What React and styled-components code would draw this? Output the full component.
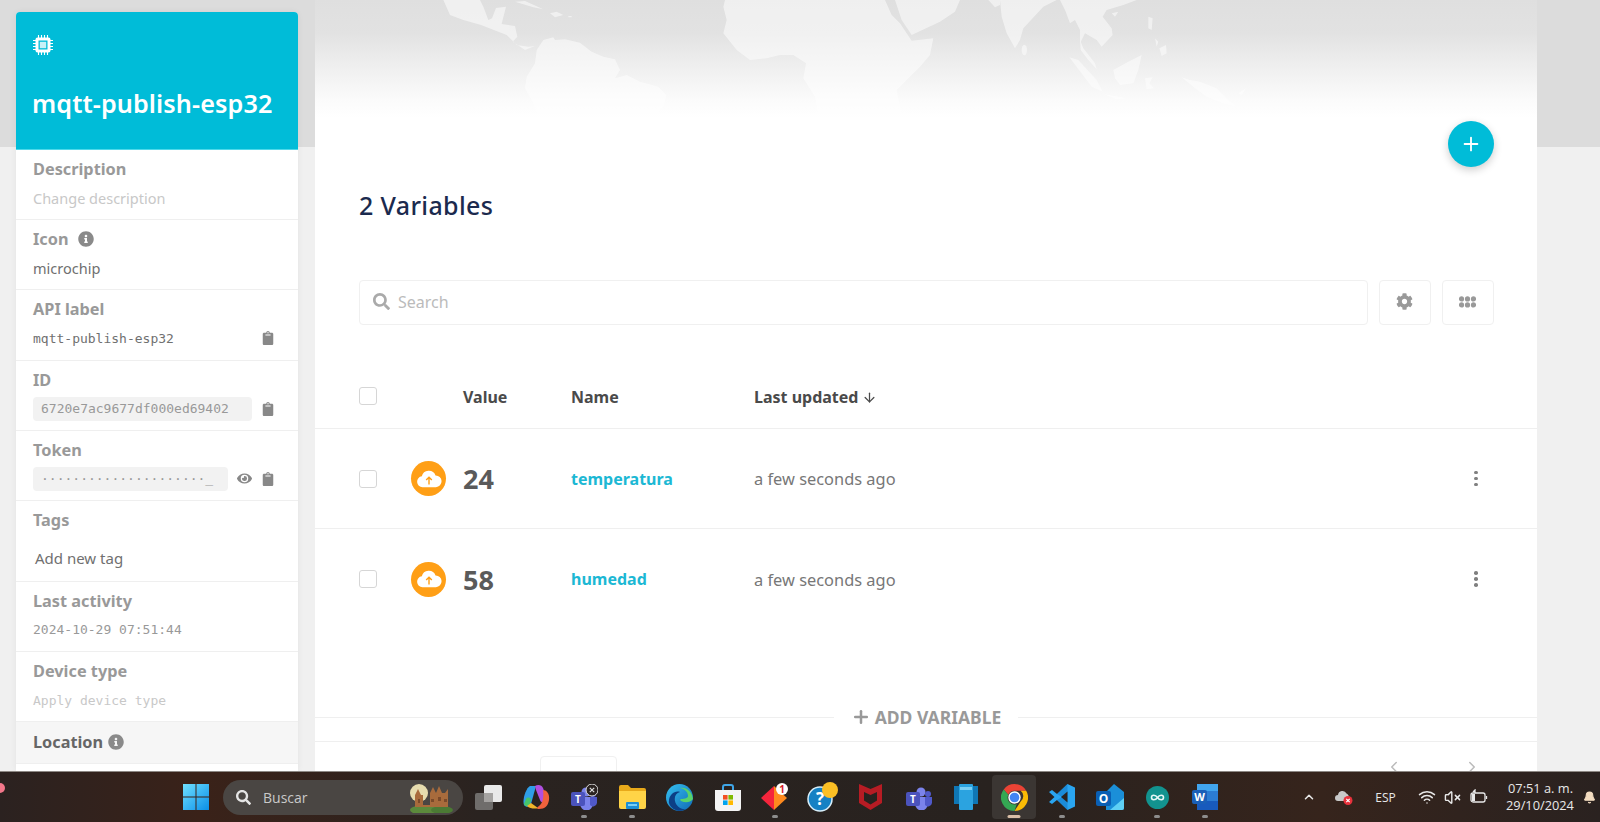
import React from "react";
import styled, { createGlobalStyle } from "styled-components";
import { FaClipboard, FaEye, FaCog, FaSearch, FaInfoCircle } from "react-icons/fa";
import { ArrowDown, Plus, ChevronUp, ChevronLeft, ChevronRight, Wifi, VolumeX, Bell } from "lucide-react";

const GlobalStyle = createGlobalStyle`
  html, body {
    margin: 0;
    height: 100%;
    overflow: hidden;
  }
  * {
    box-sizing: border-box;
  }
  body {
    font-family: "Noto Sans", Lato, sans-serif;
  }
`;

const Page = styled.div`
  height: 100vh;
  display: flex;
  flex-direction: column;
  background: linear-gradient(#dcdcdc 147px, #f0f0f0 147px);
`;

const Shell = styled.div`
  flex: 1;
  min-height: 0;
  display: flex;
  align-items: stretch;
  gap: 17px;
  padding-left: 16px;
  overflow: hidden;
`;

const Sidebar = styled.aside`
  width: 282px;
  margin-top: 12px;
  background: #fff;
  border-radius: 4px 4px 0 0;
  box-shadow: 0 0 6px rgba(0, 0, 0, 0.06);
  overflow: hidden;
`;

const DeviceHeader = styled.header`
  height: 138px;
  background: #00bcd8;
  color: #fff;
  padding: 23px 17px 0;
  border-bottom: 1px solid #4dd9ea;

  h1 {
    margin: 26px 0 0 -1px;
    font-size: 25.2px;
    line-height: 34px;
    font-weight: 600;
    letter-spacing: 0.1px;
  }
`;

const Field = styled.div`
  height: ${(p) => p.$h || 70.2}px;
  padding: 8px 17px 0;
  border-bottom: 1px solid #efefef;
`;

const FieldLabel = styled.div`
  display: flex;
  align-items: center;
  gap: 9px;
  height: 22px;
  font-size: 16.3px;
  font-weight: 700;
  color: #999;
`;

const FieldValue = styled.div`
  display: flex;
  align-items: center;
  justify-content: space-between;
  height: 24px;
  margin-top: 6px;
  font-size: ${(p) => p.$size || 14.5}px;
  color: ${(p) => p.$color || "#707070"};
  font-family: ${(p) => (p.$mono ? '"DejaVu Sans Mono", "Liberation Mono", monospace' : "inherit")};
`;

const TagValue = styled(FieldValue)`
  padding-left: 2px;
  margin-top: 15px;
`;

const Pill = styled.span`
  display: flex;
  align-items: center;
  width: ${(p) => p.$w}px;
  height: 24px;
  padding: 0 8px;
  background: #f2f2f2;
  border-radius: 4px;
  color: #999;
  white-space: nowrap;
  overflow: hidden;
`;

const FieldIcons = styled.span`
  display: flex;
  align-items: center;
  gap: 9px;
  margin-right: 6px;
  color: #888;
  font-size: 14px;
`;

const LocationRow = styled.div`
  height: 42px;
  display: flex;
  align-items: center;
  gap: 5px;
  padding: 0 17px 2px;
  background: #f6f6f6;
  border-bottom: 1px solid #efefef;
  font-size: 16.3px;
  font-weight: 700;
  color: #666;
`;

const Card = styled.main`
  position: relative;
  width: 1222px;
  background: linear-gradient(#dfdfdf, #e2e2e2 33px, #efefef 67px, #fbfbfb 100px, #fff 118px) no-repeat;
  background-size: 100% 120px;
  background-color: #fff;
  overflow: hidden;
`;

const MapArt = styled.svg`
  position: absolute;
  left: 125px;
  top: 0;
  width: 1060px;
  height: 130px;
  pointer-events: none;
`;

const FabRow = styled.div`
  position: relative;
  display: flex;
  justify-content: flex-end;
  padding: 121px 43px 0 0;
`;

const Fab = styled.button`
  width: 46px;
  height: 46px;
  padding: 0;
  display: flex;
  align-items: center;
  justify-content: center;
  border: 0;
  border-radius: 50%;
  background: #00bcd8;
  color: #fff;
  box-shadow: 0 3px 8px rgba(0, 0, 0, 0.2);
`;

const Title = styled.h2`
  margin: 20px 0 0 44px;
  height: 37px;
  font-size: 25px;
  line-height: 36px;
  font-weight: 500;
  letter-spacing: 0.35px;
  color: #1b2a4e;
`;

const Toolbar = styled.div`
  display: flex;
  gap: 11px;
  height: 45px;
  margin: 56px 43px 0 44px;
`;

const SearchBox = styled.div`
  flex: 1;
  display: flex;
  align-items: center;
  gap: 8px;
  padding: 0 0 2px 13px;
  border: 1px solid #f0f0f0;
  border-radius: 4px;
  font-size: 16px;
  color: #bbb;

  svg {
    color: #aaa;
    font-size: 17px;
  }
`;

const ToolButton = styled.button`
  width: 52px;
  padding: 0 2px 2px 0;
  display: flex;
  align-items: center;
  justify-content: center;
  background: #fff;
  border: 1px solid #f0f0f0;
  border-radius: 4px;
  color: #999;
  font-size: 17px;
`;

const TableRow = styled.div`
  display: grid;
  grid-template-columns: 52px 52px 108px 183px 1fr 60px;
  align-items: center;
  height: ${(p) => p.$h || 100}px;
  padding-left: 44px;
  border-bottom: ${(p) => (p.$line ? "1px solid #efefef" : "0")};
  font-size: 16px;
`;

const HeadRow = styled(TableRow)`
  margin-top: 39px;
  font-weight: 700;
  color: #4a4a4a;
`;

const HeadText = styled.span`
  display: flex;
  align-items: center;
  gap: 4px;
  padding-top: 2px;
`;

const Check = styled.span`
  display: block;
  width: 18px;
  height: 18px;
  background: #fff;
  border: 1px solid #d6d6d6;
  border-radius: 3px;
`;

const VarIcon = styled.span`
  display: flex;
  align-items: center;
  justify-content: center;
  width: 35px;
  height: 35px;
  border-radius: 50%;
  background: #ff9f16;
`;

const VarValue = styled.span`
  font-size: 27px;
  font-weight: 700;
  color: #5a5a5a;
`;

const VarName = styled.span`
  font-size: 16px;
  font-weight: 700;
  color: #1cb8d4;
`;

const VarTime = styled.span`
  font-size: 16.4px;
  color: #777;
`;

const Kebab = styled.span`
  display: flex;
  flex-direction: column;
  align-items: center;
  gap: 2.5px;
  width: 4px;
  justify-self: start;
  margin-left: -3px;

  i {
    width: 3.6px;
    height: 3.6px;
    border-radius: 50%;
    background: #808080;
  }
`;

const AddRow = styled.div`
  display: flex;
  align-items: center;
  height: 24px;
  margin-top: 76px;

  &::before,
  &::after {
    content: "";
    flex: 1;
    height: 1px;
    background: #efefef;
  }
`;

const AddLabel = styled.span`
  display: flex;
  align-items: center;
  gap: 4px;
  margin: 0 17px;
  font-size: 17.5px;
  font-weight: 700;
  color: #999;
`;

const Pager = styled.div`
  display: flex;
  align-items: flex-start;
  justify-content: space-between;
  margin-top: 12px;
  padding: 14px 56px 0 225px;
  height: 60px;
  border-top: 1px solid #efefef;
  color: #bbb;
`;

const PageSize = styled.span`
  display: block;
  width: 77px;
  height: 36px;
  border: 1px solid #f0f0f0;
  border-radius: 4px;
`;

const PagerArrows = styled.span`
  display: flex;
  gap: 60px;
  padding-top: 2px;
`;

const Taskbar = styled.footer`
  position: relative;
  height: 51px;
  flex-shrink: 0;
  display: flex;
  align-items: center;
  padding-left: 172px;
  background: linear-gradient(90deg, #2b2220, #3a2219 200px, #2a2320 480px, #28221f 1000px, #36241c 1320px, #2a2220);
  border-top: 1px solid #8d8884;
  color: #eee;
`;

const Slot = styled.span`
  position: relative;
  flex-shrink: 0;
  width: ${(p) => p.$w || 47.75}px;
  height: 44px;
  display: flex;
  align-items: center;
  justify-content: center;
  border-radius: 4px;
  background: ${(p) => (p.$active ? "#3b3633" : "transparent")};
  margin: ${(p) => (p.$active ? "0 1.9px" : "0")};
`;

const Indicator = styled.i`
  position: absolute;
  left: 50%;
  bottom: 1px;
  transform: translateX(-50%);
  width: ${(p) => (p.$active ? 13 : 6)}px;
  height: 3px;
  border-radius: 2px;
  background: ${(p) => (p.$active ? "#d9bda6" : "#8d8d8d")};
`;

const SearchPill = styled.div`
  width: 240px;
  height: 35px;
  margin: 0 2px 0 3px;
  flex-shrink: 0;
  display: flex;
  align-items: center;
  gap: 12px;
  padding-left: 13px;
  border-radius: 18px;
  background: #4a4643;
  font-family: "Open Sans", sans-serif;
  font-size: 14px;
  color: #c9c9c9;
`;

const Castle = styled.svg`
  margin-left: auto;
  margin-right: 8px;
`;

const Tray = styled.div`
  display: flex;
  align-items: center;
  margin-left: auto;
  padding-right: 4px;
  font-family: "Open Sans", sans-serif;
`;

const TrayItem = styled.span`
  display: flex;
  align-items: center;
  justify-content: center;
  width: ${(p) => p.$w}px;
  margin-left: ${(p) => p.$ml || 0}px;
  font-size: 12px;
  color: #e8e8e8;
`;

const Clock = styled.span`
  width: 67px;
  margin-left: 18px;
  text-align: right;
  font-size: 12.8px;
  line-height: 17px;
  color: #e8e8e8;
  white-space: nowrap;
`;

const Dot = styled.i`
  position: absolute;
  left: -5px;
  top: 11px;
  width: 10px;
  height: 10px;
  border-radius: 50%;
  background: #f2778a;
`;

const WorldMap = () => (
  <MapArt viewBox="-180 0 3180 390">
    <g fill="#fff" opacity="0.52">
      <path d="M-170 0H-60L-50 20L-35 60L-24 55L-12 24L18 20L5 72L45 78L52 110L38 125L75 150L105 138L85 140L50 135L20 105L-57 75L-110 60L-150 45Z" />
      <path d="M45 5L75 3L130 28L100 22ZM150 40L170 35L190 45L165 52ZM205 48H215V52H205Z" />
      <path d="M110 150L130 120L160 112L165 120L195 118L240 128L275 155L310 170L345 178L360 210L345 235L380 225L420 245L475 260L500 285L490 320L470 345H110L100 310L75 265L80 230L105 190Z" />
      <path d="M675 0H1155L1175 45L1200 70L1235 122L1300 115L1290 165L1260 200L1190 270L1205 345H955L945 290L910 235L918 190L880 165L840 165L800 175L750 180L710 150L670 100L680 60L670 20Z" />
      <path d="M1185 0H1380L1365 35L1320 65L1235 105L1205 60Z" />
      <path d="M1465 0H1500V15L1485 22Z" />
      <path d="M1500 0H1670L1630 20L1570 85L1560 120L1545 145L1520 100L1505 50Z" />
      <ellipse cx="1573" cy="150" rx="8" ry="16" />
      <path d="M1680 0H1910L1870 15L1820 30L1808 50L1835 85L1838 105L1805 140L1790 120L1755 100L1740 130L1740 90L1725 60L1710 70L1695 30Z" />
      <path d="M1740 120L1750 145L1785 190L1790 208L1765 180L1742 150Z" />
      <path d="M1835 40L1855 35L1845 50Z" />
      <path d="M1708 172L1735 180L1790 240L1808 275L1775 260Z" />
      <path d="M1810 282L1880 295L1850 298Z" />
      <path d="M1840 210L1885 185L1925 165L1915 210L1900 250L1860 255L1845 235Z" />
      <path d="M1945 50L1958 55L1955 90L1945 85ZM1965 115L1975 125L1970 140ZM1978 145L1998 135L2000 160L1985 168Z" />
      <path d="M1935 235L1958 232L1948 250L1962 265L1940 268Z" />
      <path d="M2045 232L2070 240L2100 245L2150 265L2185 300L2210 320L2170 310L2120 290L2085 265Z" />
      <path d="M2215 280L2238 265L2225 285Z" />
    </g>
  </MapArt>
);

const Microchip = () => (
  <svg width="20" height="20" viewBox="0 0 20 20">
    <path stroke="#fff" strokeWidth="1.1" d="M5.500 0v20M8.500 0v20M11.500 0v20M14.500 0v20M0 5.500h20M0 8.500h20M0 11.500h20M0 14.500h20" />
    <rect x="2.500" y="2.500" width="15" height="15" rx="2" fill="#fff" />
    <rect x="5.500" y="5.500" width="9" height="9" fill="#00bcd8" />
    <rect x="6.800" y="6.800" width="6.400" height="6.400" fill="#c8f1f7" />
  </svg>
);

const CloudUp = () => (
  <svg width="26" height="26" viewBox="0 0 24 24">
    <path fill="#fff" d="M6 19.500a5 5 0 0 1-.6-9.960A6.600 6.600 0 0 1 18 8.700a5.400 5.400 0 0 1 .4 10.800z" />
    <path fill="none" stroke="#ff9f16" strokeWidth="1.3" d="M12 17v-6.500M9.400 12.900 12 10.300l2.600 2.600" />
  </svg>
);

const GridDots = () => (
  <svg width="17" height="12" viewBox="0 0 17 12" fill="currentColor">
    {[0, 6, 12].map((x) => (
      <g key={x}>
        <circle cx={x + 2.5} cy="2.9" r="2.6" />
        <circle cx={x + 2.5} cy="8.9" r="2.6" />
      </g>
    ))}
  </svg>
);

const WinLogo = () => (
  <svg width="26" height="26" viewBox="0 0 26 26">
    <defs>
      <linearGradient id="win" x1="0" y1="0" x2="1" y2="1">
        <stop offset="0" stopColor="#6fe0ff" />
        <stop offset="1" stopColor="#0a8fe8" />
      </linearGradient>
    </defs>
    <path fill="url(#win)" d="M0 0h12.500v12.500H0zM13.500 0H26v12.500H13.500zM0 13.500h12.500V26H0zM13.500 13.500H26V26H13.500z" />
  </svg>
);

const TaskView = () => (
  <svg width="27" height="25" viewBox="0 0 27 25">
    <rect x="9" y="0" width="18" height="17" rx="2" fill="#e9e9e9" />
    <rect x="0" y="8" width="18" height="17" rx="2" fill="#6f6d6b" />
    <rect x="9" y="8" width="9" height="9" fill="#a5a3a1" />
  </svg>
);

const Copilot = () => (
  <svg width="27" height="26" viewBox="0 0 27 26">
    <path fill="#2f9ee8" d="M7 2h6L8 20c-1 3-5 4-7 1-2-5 2-17 6-19z" />
    <path fill="#46c46a" d="M3 15c1-2 5-2 5 1l-1 4c-1 3-5 3-6 0z" />
    <path fill="#f0b429" d="M4 22c3 3 9 3 11 2L8 19z" />
    <path fill="#b04fe0" d="M12 2c3-2 7-1 8 2l5 13c-3 3-7 2-8-1L13 6z" />
    <path fill="#f0623c" d="M20 6c3 0 7 3 6 10-1 6-4 9-10 9-3 0-2-2 0-3 4-3 5-9 4-16z" />
  </svg>
);

const Teams = ({ badge }) => (
  <svg width="28" height="26" viewBox="0 0 28 26">
    <circle cx="16" cy="8" r="4.500" fill="#7b83eb" />
    <circle cx="23" cy="10" r="3" fill="#5059c9" />
    <path fill="#7b83eb" d="M10 13h13v7a6 6 0 0 1-13 0z" />
    <path fill="#5059c9" d="M20 13h7v6a4 4 0 0 1-7 2z" />
    <rect x="1" y="8" width="14" height="14" rx="2" fill="#4b53bc" />
    <text x="8" y="19" textAnchor="middle" fontSize="10" fontWeight="700" fontFamily="Open Sans" fill="#fff">T</text>
    {badge && (
      <g>
        <circle cx="22" cy="6" r="6" fill="#2a2320" stroke="#ddd" />
        <path d="M19.800 3.800l4.400 4.400M24.200 3.800l-4.400 4.400" stroke="#ddd" strokeWidth="1.2" />
      </g>
    )}
  </svg>
);

const Folder = () => (
  <svg width="27" height="24" viewBox="0 0 27 24">
    <path fill="#e8a91a" d="M0 2a2 2 0 0 1 2-2h7l3 3h13a2 2 0 0 1 2 2v3H0z" />
    <path fill="#ffd447" d="M0 6h27v16a2 2 0 0 1-2 2H2a2 2 0 0 1-2-2z" />
    <rect x="7" y="17" width="13" height="7" rx="1" fill="#1c8fd6" />
    <rect x="9" y="19" width="9" height="2" fill="#7bd0f5" />
  </svg>
);

const Edge = () => (
  <svg width="27" height="27" viewBox="0 0 27 27">
    <defs>
      <linearGradient id="edge" x1="0" y1="0" x2="1" y2="1">
        <stop offset="0" stopColor="#35c1f1" />
        <stop offset="1" stopColor="#1068b5" />
      </linearGradient>
    </defs>
    <circle cx="13.500" cy="13.500" r="13.500" fill="url(#edge)" />
    <path fill="#58d26c" d="M27 15C26 7 20 3 14 4c5 1 8 4 8 8 0 2-3 3-7 3-1 0-1 1 0 2 4 2 9 2 12-2z" />
    <path fill="#0c3f86" d="M3 19c-1-8 6-13 11-11-4 1-6 5-5 9 1 5 6 9 11 8-6 4-15 1-17-6z" />
  </svg>
);

const Store = () => (
  <svg width="26" height="27" viewBox="0 0 26 27">
    <path fill="none" stroke="#3fa6e8" strokeWidth="2" d="M8 7V3a2 2 0 0 1 2-2h6a2 2 0 0 1 2 2v4" />
    <path fill="#f4f4f4" d="M0 6h26v18a3 3 0 0 1-3 3H3a3 3 0 0 1-3-3z" />
    <path fill="#f25022" d="M8 11h4.600v4.600H8z" />
    <path fill="#7fba00" d="M13.400 11H18v4.600h-4.600z" />
    <path fill="#00a4ef" d="M8 16.400h4.600V21H8z" />
    <path fill="#ffb900" d="M13.400 16.400H18V21h-4.600z" />
  </svg>
);

const Diamond = () => (
  <svg width="30" height="28" viewBox="0 0 30 28">
    <path fill="#f5253c" d="M14 3L1 15l13 12z" />
    <path fill="#ff8a1e" d="M14 3l13 12-13 12z" />
    <circle cx="22" cy="6" r="6" fill="#fff" />
    <text x="22" y="10" textAnchor="middle" fontSize="10" fontWeight="700" fontFamily="Open Sans" fill="#d61f2c">1</text>
  </svg>
);

const HelpIcon = () => (
  <svg width="32" height="30" viewBox="0 0 32 30">
    <circle cx="13" cy="17" r="12" fill="#1581c4" stroke="#d8eef9" strokeWidth="1.500" />
    <text x="13" y="23" textAnchor="middle" fontSize="17" fontWeight="700" fontFamily="Open Sans" fill="#fff">?</text>
    <circle cx="23" cy="8" r="8" fill="#fbbf24" />
  </svg>
);

const McAfee = () => (
  <svg width="23" height="26" viewBox="0 0 23 26">
    <path fill="#b71c24" d="M0 0l11.500 5L23 0v19l-11.500 7L0 19zM5 8v8.500l6.500 4 6.500-4V8l-6.500 3z" />
  </svg>
);

const BlueDevice = () => (
  <svg width="26" height="26" viewBox="0 0 26 26">
    <rect x="1" y="2" width="24" height="18" fill="#0f77b5" />
    <rect x="6" y="0" width="14" height="26" rx="1" fill="#2ba3e0" />
    <rect x="7" y="3" width="12" height="3" fill="#7ad0f5" />
  </svg>
);

const Chrome = () => (
  <svg width="27" height="27" viewBox="0 0 48 48">
    <path fill="#ea4335" d="M24 0a24 24 0 0 1 20.800 12H24a12 12 0 0 0-11 7L4.800 9.600A24 24 0 0 1 24 0z" />
    <path fill="#fbbc05" d="M44.800 12A24 24 0 0 1 24 48l11-17a12 12 0 0 0 0-19z" />
    <path fill="#34a853" d="M4.800 9.600 13 19a12 12 0 0 0 15 16.500L24 48A24 24 0 0 1 4.800 9.600z" />
    <circle cx="24" cy="24" r="11" fill="#fff" />
    <circle cx="24" cy="24" r="8.500" fill="#4285f4" />
  </svg>
);

const VsCode = () => (
  <svg width="26" height="26" viewBox="0 0 26 26">
    <path fill="#2aa5f0" d="M18.500 0 26 3.500v19L18.500 26 8 16l-5 4-3-2 5.500-5L0 8l3-2 5 4z" />
    <path fill="#0f78c8" d="M18.500 0v26L8 16l5-3-5-3z" opacity="0.55" />
    <path fill="#2a2320" d="M18.500 7.500 12 13l6.500 5.500z" />
  </svg>
);

const Outlook = () => (
  <svg width="28" height="26" viewBox="0 0 28 26">
    <path fill="#1b8fd8" d="M10 8l8-8 10 8v16a2 2 0 0 1-2 2H10z" />
    <path fill="#5fd0f5" d="M14 26l14-12v10a2 2 0 0 1-2 2z" />
    <rect x="0" y="7" width="15" height="15" rx="2" fill="#0a5fb4" />
    <text x="7.500" y="19" textAnchor="middle" fontSize="12" fontWeight="700" fontFamily="Open Sans" fill="#fff">O</text>
  </svg>
);

const Arduino = () => (
  <svg width="23" height="23" viewBox="0 0 23 23">
    <circle cx="11.500" cy="11.500" r="11.500" fill="#12938f" />
    <path fill="none" stroke="#e6f7f6" strokeWidth="1.6" d="M11.500 11.500c-2-3-6-3-6 0s4 3 6 0 6-3 6 0-4 3-6 0z" />
  </svg>
);

const Word = () => (
  <svg width="26" height="26" viewBox="0 0 26 26">
    <rect x="5" y="0" width="21" height="26" rx="2" fill="#2b7cd3" />
    <rect x="5" y="0" width="21" height="7" fill="#41a5ee" />
    <rect x="5" y="17" width="21" height="9" fill="#185abd" />
    <rect x="0" y="6" width="15" height="14" rx="2" fill="#1a5fb8" />
    <text x="7.500" y="17" textAnchor="middle" fontSize="11" fontWeight="700" fontFamily="Open Sans" fill="#fff">W</text>
  </svg>
);

const CloudOff = () => (
  <svg width="18" height="15" viewBox="0 0 18 15">
    <path fill="#c9c9c9" d="M3 11a3 3 0 0 1 0-6 4.500 4.500 0 0 1 8.500-1.500A3.500 3.500 0 0 1 13 9l-3 2z" />
    <circle cx="13" cy="10.500" r="4.500" fill="#e8323c" />
    <path stroke="#fff" strokeWidth="1.2" d="M11.300 8.800l3.400 3.400M14.700 8.800l-3.400 3.400" />
  </svg>
);

const Battery = () => (
  <svg width="18" height="16" viewBox="0 0 18 16" fill="none" stroke="#e8e8e8" strokeWidth="1.3">
    <rect x="1" y="4" width="14" height="9" rx="2" />
    <path d="M16.500 7v3" />
    <path fill="#e8e8e8" stroke="none" d="M2 5h3v7H2z" />
    <path d="M3 3l2-2v3" />
  </svg>
);

const CastleArt = () => (
  <Castle width="48" height="32" viewBox="0 0 48 32">
    <circle cx="12" cy="12" r="9" fill="#e6dcae" />
    <ellipse cx="18" cy="29" rx="15" ry="5" fill="#5c8a3c" />
    <ellipse cx="35" cy="29" rx="11" ry="4" fill="#4b7a34" />
    <path fill="#a86b3c" d="M8 26V14l3-6 3 6h2V24h7V12l3-6 3 6 3-7 3 7h3l3-4v18z" />
    <path fill="#7b4a2a" d="M24 18h3v3h-3zM31 16h3v4h-3zM37 18h3v3h-3zM11 18h2v4h-2z" />
  </Castle>
);

const taskApps = [
  { key: "view", icon: <TaskView /> },
  { key: "copilot", icon: <Copilot /> },
  { key: "teams-old", icon: <Teams badge />, open: true },
  { key: "files", icon: <Folder />, open: true },
  { key: "edge", icon: <Edge /> },
  { key: "store", icon: <Store /> },
  { key: "diamond", icon: <Diamond />, open: true },
  { key: "help", icon: <HelpIcon /> },
  { key: "mcafee", icon: <McAfee /> },
  { key: "teams", icon: <Teams /> },
  { key: "device", icon: <BlueDevice /> },
  { key: "chrome", icon: <Chrome />, open: true, active: true },
  { key: "vscode", icon: <VsCode />, open: true },
  { key: "outlook", icon: <Outlook /> },
  { key: "arduino", icon: <Arduino />, open: true },
  { key: "word", icon: <Word />, open: true },
];

const variables = [
  { name: "temperatura", value: "24", line: true },
  { name: "humedad", value: "58" },
];

const App = () => (
  <Page>
    <GlobalStyle />
    <Shell>
      <Sidebar>
        <DeviceHeader>
          <Microchip />
          <h1>mqtt-publish-esp32</h1>
        </DeviceHeader>
        <Field>
          <FieldLabel>Description</FieldLabel>
          <FieldValue $color="#c8c8c8">Change description</FieldValue>
        </Field>
        <Field>
          <FieldLabel>
            Icon <FaInfoCircle size={16} color="#8a8a8a" />
          </FieldLabel>
          <FieldValue>microchip</FieldValue>
        </Field>
        <Field>
          <FieldLabel>API label</FieldLabel>
          <FieldValue $mono $size={13}>
            mqtt-publish-esp32
            <FieldIcons>
              <FaClipboard />
            </FieldIcons>
          </FieldValue>
        </Field>
        <Field>
          <FieldLabel>ID</FieldLabel>
          <FieldValue $mono $size={13}>
            <Pill $w={219}>6720e7ac9677df000ed69402</Pill>
            <FieldIcons>
              <FaClipboard />
            </FieldIcons>
          </FieldValue>
        </Field>
        <Field>
          <FieldLabel>Token</FieldLabel>
          <FieldValue $mono $size={13}>
            <Pill $w={195}>·····················_</Pill>
            <FieldIcons>
              <FaEye size={15} />
              <FaClipboard />
            </FieldIcons>
          </FieldValue>
        </Field>
        <Field $h={81}>
          <FieldLabel>Tags</FieldLabel>
          <TagValue $size={15}>Add new tag</TagValue>
        </Field>
        <Field>
          <FieldLabel>Last activity</FieldLabel>
          <FieldValue $mono $size={13} $color="#999">
            2024-10-29 07:51:44
          </FieldValue>
        </Field>
        <Field>
          <FieldLabel>Device type</FieldLabel>
          <FieldValue $mono $size={13} $color="#c8c8c8">
            Apply device type
          </FieldValue>
        </Field>
        <LocationRow>
          Location <FaInfoCircle size={16} color="#8a8a8a" />
        </LocationRow>
      </Sidebar>

      <Card>
        <WorldMap />
        <FabRow>
          <Fab>
            <Plus size={22} strokeWidth={2} />
          </Fab>
        </FabRow>
        <Title>2 Variables</Title>
        <Toolbar>
          <SearchBox>
            <FaSearch />
            Search
          </SearchBox>
          <ToolButton>
            <FaCog />
          </ToolButton>
          <ToolButton>
            <GridDots />
          </ToolButton>
        </Toolbar>
        <HeadRow $h={65} $line>
          <Check />
          <span />
          <HeadText>Value</HeadText>
          <HeadText>Name</HeadText>
          <HeadText>
            Last updated <ArrowDown size={15} />
          </HeadText>
          <span />
        </HeadRow>
        {variables.map((v) => (
          <TableRow key={v.name} $line={v.line}>
            <Check />
            <VarIcon>
              <CloudUp />
            </VarIcon>
            <VarValue>{v.value}</VarValue>
            <VarName>{v.name}</VarName>
            <VarTime>a few seconds ago</VarTime>
            <Kebab>
              <i />
              <i />
              <i />
            </Kebab>
          </TableRow>
        ))}
        <AddRow>
          <AddLabel>
            <Plus size={20} strokeWidth={3} /> ADD VARIABLE
          </AddLabel>
        </AddRow>
        <Pager>
          <PageSize />
          <PagerArrows>
            <ChevronLeft size={18} />
            <ChevronRight size={18} />
          </PagerArrows>
        </Pager>
      </Card>
    </Shell>

    <Taskbar>
      <Dot />
      <Slot $w={48}>
        <WinLogo />
      </Slot>
      <SearchPill>
        <FaSearch size={15} color="#e4e4e4" />
        Buscar
        <CastleArt />
      </SearchPill>
      {taskApps.map((app) => (
        <Slot key={app.key} $active={app.active} $w={app.active ? 44 : undefined}>
          {app.icon}
          {app.open && <Indicator $active={app.active} />}
        </Slot>
      ))}
      <Tray>
        <TrayItem $w={14}>
          <ChevronUp size={20} strokeWidth={2.6} />
        </TrayItem>
        <TrayItem $w={18} $ml={19}>
          <CloudOff />
        </TrayItem>
        <TrayItem $w={21} $ml={22}>
          ESP
        </TrayItem>
        <TrayItem $w={18} $ml={22}>
          <Wifi size={18} />
        </TrayItem>
        <TrayItem $w={17} $ml={8}>
          <VolumeX size={17} />
        </TrayItem>
        <TrayItem $w={18} $ml={9}>
          <Battery />
        </TrayItem>
        <Clock>
          07:51 a. m.
          <br />
          29/10/2024
        </Clock>
        <TrayItem $w={13} $ml={10}>
          <Bell size={17} fill="#f3dcc0" color="#f3dcc0" />
        </TrayItem>
      </Tray>
    </Taskbar>
  </Page>
);

export default App;
